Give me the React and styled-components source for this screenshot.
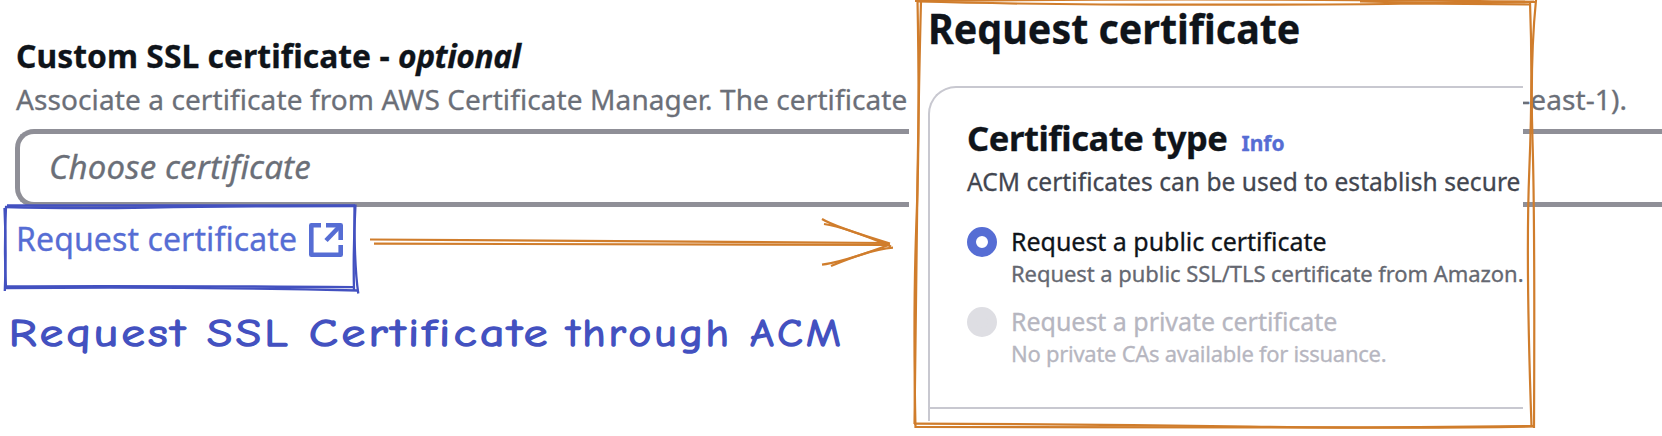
import React from 'react';
import styled, { createGlobalStyle } from 'styled-components';

const Global = createGlobalStyle`
  *, *::before, *::after { box-sizing: border-box; }
  body {
    margin: 0;
    background: #fff;
    font-family: "Noto Sans", "Open Sans", sans-serif;
    color: #0f141a;
  }
`;

const Page = styled.main`
  position: relative;
  width: 1662px;
  height: 436px;
  overflow: hidden;
  background: #fff;
  white-space: nowrap;
  -webkit-text-stroke: 0.3px currentColor;
`;

const Field = styled.section`
  display: flex;
  flex-direction: column;
  padding: 36px 0 0 15px;
`;

const FieldLabel = styled.div`
  margin-left: 1px;
  font-size: 31.8px;
  line-height: 40px;
  font-weight: 700;
  letter-spacing: 0.05px;

  em { letter-spacing: -0.45px; }
`;

const FieldHint = styled.div`
  display: flex;
  justify-content: space-between;
  width: 1611px;
  margin: 5px 0 12px 1px;
  font-size: 28px;
  line-height: 36px;
  letter-spacing: 0.1px;
  color: #6b6f78;
`;

const Select = styled.div`
  display: flex;
  align-items: center;
  height: 78px;
  padding: 0 0 3px 29px;
  border: 5px solid #8f8f97;
  border-right: 0;
  border-radius: 19px 0 0 19px;
  font-size: 33px;
  font-style: italic;
  letter-spacing: 0.15px;
  color: #6b6f78;
`;

const ExternalLink = styled.a`
  display: flex;
  align-items: center;
  gap: 12px;
  margin: 10px 0 0 1px;
  font-size: 32px;
  line-height: 44px;
  letter-spacing: 0.1px;
  color: #566dd4;

  svg { display: block; margin-top: 2px; }
`;

const Panel = styled.section`
  position: absolute;
  top: 0;
  left: 909px;
  width: 614px;
  height: 436px;
  padding-left: 19px;
  background: #fff;
`;

const PanelTitle = styled.h1`
  margin: 0;
  font-size: 42px;
  line-height: 56px;
  transform: scaleX(0.938);
  transform-origin: left;
`;

const Card = styled.div`
  height: 335px;
  margin-top: 30px;
  border: solid #c8c8d0;
  border-width: 2px 0 0 2px;
  border-top-left-radius: 28px;
`;

const CardBody = styled.div`
  height: 321px;
  padding: 28px 0 0 37px;
  border-bottom: 2px solid #c8c8d0;
`;

const CardHeader = styled.div`
  display: flex;
  align-items: baseline;
  gap: 14px;
`;

const CardTitle = styled.h2`
  margin: 0;
  font-size: 34.5px;
  line-height: 44px;
  letter-spacing: -0.42px;
`;

const Info = styled.a`
  font-size: 21px;
  font-weight: 700;
  line-height: 30px;
  color: #566dd4;
`;

const CardText = styled.p`
  margin: 5px 0 25px;
  font-size: 24.5px;
  line-height: 34px;
  letter-spacing: 0.06px;
  color: #424650;
`;

const Option = styled.div`
  display: grid;
  grid-template-columns: 30px 1fr;
  column-gap: 14px;
  margin-bottom: 18px;
  color: ${(p) => (p.$disabled ? '#b6b6c0' : '#0f141a')};
`;

const Radio = styled.span`
  width: 30px;
  height: 30px;
  margin-top: 3px;
  border-radius: 50%;
  border: 9px solid ${(p) => (p.$disabled ? '#dedee3' : '#566dd4')};
  background: ${(p) => (p.$disabled ? '#dedee3' : '#fff')};
`;

const OptionLabel = styled.div`
  font-size: 25px;
  line-height: 34px;
  letter-spacing: -0.03px;
`;

const OptionHint = styled.div`
  margin-top: 2px;
  font-size: 22px;
  line-height: 27px;
  margin-bottom: -1px;
  letter-spacing: ${(p) => (p.$disabled ? '-0.27px' : '-0.06px')};
  color: ${(p) => (p.$disabled ? '#b6b6c0' : '#656871')};
`;

const Sketch = styled.svg`
  position: absolute;
  inset: 0;
  width: 1662px;
  height: 436px;
  pointer-events: none;
  fill: none;
`;

const BlueStroke = styled.path`
  stroke: #4351c0;
  stroke-width: 2.3;
`;

const OrangeStroke = styled.path`
  stroke: #d07d2c;
  stroke-width: 2.2;
`;

const Handwriting = styled.text`
  fill: #4351c0;
  stroke: #4351c0;
  stroke-width: 1.5;
  stroke-linejoin: round;
  letter-spacing: 3px;
  font: 400 39px "Comic Neue", "Lato", sans-serif;
`;

const words = [
  { text: 'Request', x: 9, width: 179 },
  { text: 'SSL', x: 207, width: 84 },
  { text: 'Certificate', x: 309, width: 242 },
  { text: 'through', x: 567, width: 165 },
  { text: 'ACM', x: 750, width: 94 },
];

function ExternalIcon() {
  return (
    <svg width="34" height="34" viewBox="0 0 34 34" fill="none" stroke="#566dd4" strokeWidth="4.6">
      <path d="M12 2.3H2.3V31.7H31.7V22" strokeLinejoin="round" />
      <path d="M17 2.3H31.7V17" strokeLinejoin="round" />
      <path d="M17 17.5 31 3" />
    </svg>
  );
}

export default function App() {
  return (
    <>
      <Global />
      <Page>
        <Field>
          <FieldLabel>
            Custom SSL certificate - <em>optional</em>
          </FieldLabel>
          <FieldHint>
            <span>Associate a certificate from AWS Certificate Manager. The certificate</span>
            <span>-east-1).</span>
          </FieldHint>
          <Select>Choose certificate</Select>
          <ExternalLink>
            Request certificate
            <ExternalIcon />
          </ExternalLink>
        </Field>

        <Panel>
          <PanelTitle>Request certificate</PanelTitle>
          <Card>
            <CardBody>
              <CardHeader>
                <CardTitle>Certificate type</CardTitle>
                <Info>Info</Info>
              </CardHeader>
              <CardText>ACM certificates can be used to establish secure</CardText>
              <Option>
                <Radio />
                <div>
                  <OptionLabel>Request a public certificate</OptionLabel>
                  <OptionHint>Request a public SSL/TLS certificate from Amazon.</OptionHint>
                </div>
              </Option>
              <Option $disabled>
                <Radio $disabled />
                <div>
                  <OptionLabel>Request a private certificate</OptionLabel>
                  <OptionHint $disabled>No private CAs available for issuance.</OptionHint>
                </div>
              </Option>
            </CardBody>
          </Card>
        </Panel>

        <Sketch viewBox="0 0 1662 436">
          <BlueStroke d="M7 205.5Q180 206 355 205.3" />
          <BlueStroke d="M5 207Q70 209 150 207.5T355 206" />
          <BlueStroke d="M4.5 208Q6.5 250 4.8 291" />
          <BlueStroke d="M6 206.5Q4 250 6 288" />
          <BlueStroke d="M355.5 204.5Q353 250 354 290" />
          <BlueStroke d="M354.5 206Q354 265 358.3 293.5" />
          <BlueStroke d="M5 286.3Q150 285.5 353 287.2" />
          <BlueStroke d="M5 288.2Q180 286.5 358 290.5" />

          <OrangeStroke d="M370 239.5Q600 240 889 243" />
          <OrangeStroke d="M374 243.7Q620 245 889 244.8" />
          <OrangeStroke d="M822 219Q835 227 890 243.5" />
          <OrangeStroke d="M824 224Q845 227 891 246.5" />
          <OrangeStroke d="M822 264.7Q843 262 890 244.5" />
          <OrangeStroke d="M831 266Q872 249 893 247.7" />

          <OrangeStroke d="M915 1Q1100 -1 1280 -0.3T1535 2" />
          <OrangeStroke d="M917 1.5Q1050 5 1220 4.7T1406 3.5L1531 4.5" />
          <OrangeStroke d="M1360 1.5Q1460 3.5 1534 1.5" />
          <OrangeStroke d="M917.5 0Q920 130 916.5 220T915.5 428" />
          <OrangeStroke d="M921 1Q919 80 917.500 180T914.5 424" />
          <OrangeStroke d="M1530 2Q1533 80 1529.3 170T1531.5 426" />
          <OrangeStroke d="M1536 0Q1530 60 1532.5 140T1534 428" />
          <OrangeStroke d="M914 423.7Q1080 424 1250 426.5T1535 426.5" />
          <OrangeStroke d="M916 427Q1090 427 1250 427.3T1534 426" />

          {words.map((w) => (
            <Handwriting
              key={w.text}
              x={w.x}
              y="346"
              textLength={w.width}
              lengthAdjust="spacingAndGlyphs"
            >
              {w.text}
            </Handwriting>
          ))}
        </Sketch>
      </Page>
    </>
  );
}
